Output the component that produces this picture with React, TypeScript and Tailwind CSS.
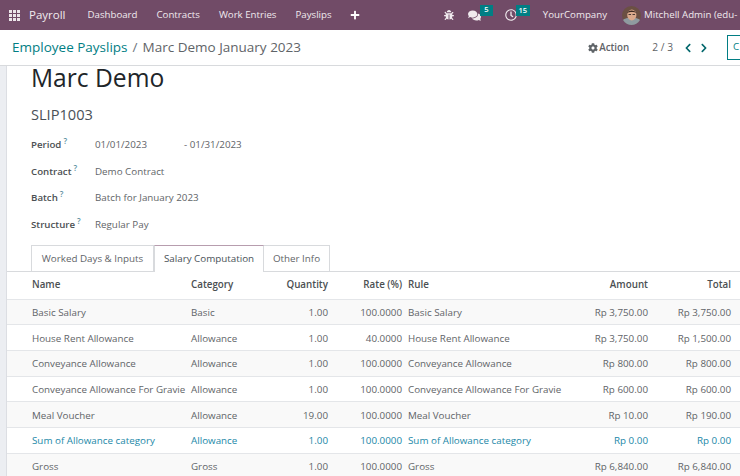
import { FaBug, FaChevronLeft, FaChevronRight, FaCog, FaComments, FaPlus, FaRegClock } from 'react-icons/fa';

const rows = [
  { name: 'Basic Salary', category: 'Basic', quantity: '1.00', rate: '100.0000', amount: 'Rp 3,750.00', total: 'Rp 3,750.00' },
  { name: 'House Rent Allowance', category: 'Allowance', quantity: '1.00', rate: '40.0000', amount: 'Rp 3,750.00', total: 'Rp 1,500.00' },
  { name: 'Conveyance Allowance', category: 'Allowance', quantity: '1.00', rate: '100.0000', amount: 'Rp 800.00', total: 'Rp 800.00' },
  { name: 'Conveyance Allowance For Gravie', category: 'Allowance', quantity: '1.00', rate: '100.0000', amount: 'Rp 600.00', total: 'Rp 600.00' },
  { name: 'Meal Voucher', category: 'Allowance', quantity: '19.00', rate: '100.0000', amount: 'Rp 10.00', total: 'Rp 190.00' },
  { name: 'Sum of Allowance category', category: 'Allowance', quantity: '1.00', rate: '100.0000', amount: 'Rp 0.00', total: 'Rp 0.00', link: true },
  { name: 'Gross', category: 'Gross', quantity: '1.00', rate: '100.0000', amount: 'Rp 6,840.00', total: 'Rp 6,840.00' },
];

const fields = [
  { label: 'Contract', value: 'Demo Contract' },
  { label: 'Batch', value: 'Batch for January 2023' },
  { label: 'Structure', value: 'Regular Pay' },
];

const rowClass = 'grid grid-cols-[159px_72px_65px_74px_6px_176px_64px_83px] pl-[25px] items-center';

function AppsIcon() {
  return (
    <div className="grid grid-cols-3 gap-[1px]">
      {Array.from({ length: 9 }).map((_, i) => (
        <span key={i} className="h-[3px] w-[3px] bg-[#ece6ea]" />
      ))}
    </div>
  );
}

function Avatar() {
  return (
    <svg width="19" height="19" viewBox="0 0 19 19" className="shrink-0">
      <circle cx="9.5" cy="9.5" r="9.5" fill="#6b5043" />
      <path d="M1 14c2-3 15-3 17 0-2 3.500-5 5-8.500 5S3 17.500 1 14z" fill="#8f9aa0" />
      <ellipse cx="9.800" cy="9" rx="4.600" ry="5.400" fill="#d9a98c" />
      <path d="M5 7c1-3.500 8-3.500 9.500 0-2-1.200-7-1.200-9.500 0z" fill="#3c2a22" />
      <path d="M6.500 8.500h2.500M10.500 8.500H13" stroke="#4a3a34" strokeWidth="1" />
    </svg>
  );
}

function Label({ text }: { text: string }) {
  return (
    <div className="w-[64px] shrink-0 text-[9.7px] font-semibold text-[#4b4f52]">
      {text}
      <sup className="ml-[2px] text-[8px] font-semibold text-[#5b8fa0]">?</sup>
    </div>
  );
}

export default function App() {
  return (
    <div className="flex h-[476px] w-[740px] flex-col overflow-hidden bg-white font-['Open_Sans',sans-serif]">
      <header className="flex h-[30px] shrink-0 items-center bg-[#714b67] text-[#f0eaee]">
        <div className="ml-[9px] mr-[9px]">
          <AppsIcon />
        </div>
        <span className="text-[11.5px]">Payroll</span>
        <nav className="ml-[22px] flex gap-[19px] text-[9.7px]">
          <span>Dashboard</span>
          <span>Contracts</span>
          <span>Work Entries</span>
          <span>Payslips</span>
        </nav>
        <FaPlus className="ml-[18px] text-[10px] text-white" />
        <div className="ml-auto flex shrink-0 items-center">
          <FaBug className="text-[10px]" />
          <div className="relative ml-[14px]">
            <FaComments className="text-[13px]" />
            <span className="absolute left-[12px] top-[-4px] flex h-[11px] w-[13px] items-center justify-center bg-[#017e84] text-[7.5px] font-semibold text-white">
              5
            </span>
          </div>
          <div className="relative ml-[24px]">
            <FaRegClock className="text-[12px]" />
            <span className="absolute left-[11px] top-[-4px] flex h-[11px] w-[14px] items-center justify-center bg-[#017e84] text-[7.5px] font-semibold text-white">
              15
            </span>
          </div>
          <span className="ml-[26px] text-[9.7px]">YourCompany</span>
          <div className="ml-[15px] mr-[3px]">
            <Avatar />
          </div>
          <span className="w-[96px] whitespace-nowrap text-[9.7px]">Mitchell Admin (edu-</span>
        </div>
      </header>

      <div className="flex h-[36px] shrink-0 items-center border-b border-[#d8dadd] pl-[12px]">
        <span className="text-[13.5px] text-[#017e84]">Employee Payslips</span>
        <span className="ml-[5px] text-[13.5px] text-[#6c757d]">/</span>
        <span className="ml-[5px] text-[13.5px] text-[#5f6468]">Marc Demo January 2023</span>
        <div className="ml-auto flex shrink-0 items-center">
          <FaCog className="text-[10px] text-[#5f6468]" />
          <span className="ml-[1px] pt-[1px] text-[9.8px] font-semibold text-[#5f6468]">Action</span>
          <span className="ml-[23px] pt-[1px] text-[10.2px] text-[#5f6468]">2 / 3</span>
          <FaChevronLeft className="ml-[10px] text-[10px] text-[#01666b]" />
          <FaChevronRight className="ml-[6px] text-[10px] text-[#01666b]" />
          <span className="ml-[18px] flex h-[25px] w-[13px] items-center overflow-hidden border border-r-0 border-[#017e84] pl-[5px] text-[9.8px] text-[#017e84]">
            C
          </span>
        </div>
      </div>

      <main className="flex min-h-0 flex-1 flex-col overflow-hidden border-l-[6px] border-[#eceef2]">
        <div className="border-l border-[#dcdee3]">
          <div className="pl-[24px]">
            <h1 className="text-[24.6px] leading-[24px] text-[#212529]">Marc Demo</h1>
            <div className="mt-[14px] text-[14.6px] leading-[21px] text-[#495057]">SLIP1003</div>
            <div className="mt-[12px] flex h-[17px] items-center">
              <Label text="Period" />
              <span className="text-[9.8px] text-[#5f6468]">01/01/2023</span>
              <span className="ml-[37px] text-[9.8px] text-[#5f6468]">- 01/31/2023</span>
            </div>
            <div className="mt-[9.500px] flex flex-col gap-[9.500px]">
              {fields.map((field) => (
                <div key={field.label} className="flex h-[17px] items-center">
                  <Label text={field.label} />
                  <span className="text-[9.8px] text-[#5f6468]">{field.value}</span>
                </div>
              ))}
            </div>
          </div>

          <div className="mt-[11px] flex h-[27px] items-stretch border-b border-[#d8dadd] pl-[24px] text-[9.8px]">
            <span className="flex w-[123px] items-center justify-center border border-b-0 border-[#d8dadd] pt-[2px] text-[#5f6468]">
              Worked Days &amp; Inputs
            </span>
            <span className="-mb-[1px] flex w-[110px] items-center justify-center border border-b-0 border-x-[#d8dadd] border-t-[#b79dae] bg-white pt-[2px] text-[#495057]">
              Salary Computation
            </span>
            <span className="flex w-[66px] items-center justify-center border border-b-0 border-l-0 border-[#d8dadd] pt-[2px] text-[#5f6468]">
              Other Info
            </span>
          </div>

          <div className="text-[9.8px]">
            <div className={`${rowClass} h-[28px] border-b border-[#e4e6e9] pt-[1px] font-semibold text-[#4b4f52]`}>
              <span>Name</span>
              <span>Category</span>
              <span className="text-right">Quantity</span>
              <span className="text-right">Rate (%)</span>
              <span />
              <span>Rule</span>
              <span className="text-right">Amount</span>
              <span className="text-right">Total</span>
            </div>
            {rows.map((row, i) => (
              <div
                key={row.name}
                className={`${rowClass} h-[25.7px] border-b border-[#e4e6e9] pt-[3px] ${i % 2 === 0 ? 'bg-[#f9f9f9]' : 'bg-white'} ${row.link ? 'text-[#1b88a8]' : 'text-[#5f6468]'}`}
              >
                <span className="whitespace-nowrap">{row.name}</span>
                <span>{row.category}</span>
                <span className="text-right">{row.quantity}</span>
                <span className="text-right">{row.rate}</span>
                <span />
                <span className="whitespace-nowrap">{row.name}</span>
                <span className="text-right">{row.amount}</span>
                <span className="text-right">{row.total}</span>
              </div>
            ))}
          </div>
        </div>
      </main>
    </div>
  );
}
